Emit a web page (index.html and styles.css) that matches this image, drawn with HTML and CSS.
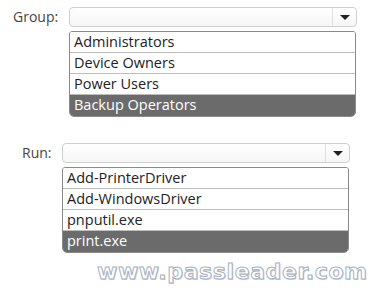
FILE: index.html
```html
<!DOCTYPE html>
<html lang="en">
<head>
  <meta charset="UTF-8">
  <title>Group and Run</title>
  <link rel="stylesheet" href="styles.css">
</head>
<body>

  <div class="field field-group">
    <label class="field-label">Group:</label>
    <div class="combo">
      <span class="combo-value"></span>
      <span class="combo-btn"><span class="arrow"></span></span>
    </div>
    <ul class="options">
      <li>Administrators</li>
      <li>Device Owners</li>
      <li>Power Users</li>
      <li class="selected">Backup Operators</li>
    </ul>
  </div>

  <div class="field field-run">
    <label class="field-label">Run:</label>
    <div class="combo">
      <span class="combo-value"></span>
      <span class="combo-btn"><span class="arrow"></span></span>
    </div>
    <ul class="options">
      <li>Add-PrinterDriver</li>
      <li>Add-WindowsDriver</li>
      <li>pnputil.exe</li>
      <li class="selected">print.exe</li>
    </ul>
  </div>

  <div class="watermark">www.passleader.com</div>

</body>
</html>
```

FILE: styles.css
```css
* {
  margin: 0;
  padding: 0;
  box-sizing: border-box;
}

body {
  font-family: 'Open Sans', 'Noto Sans', sans-serif;
  background: #fff;
  color: #222;
  width: 378px;
  height: 296px;
  overflow: hidden;
}

.field {
  display: grid;
  row-gap: 4px;
  align-items: center;
}

.field-group {
  padding: 7px 0 0 13px;
  grid-template-columns: 56px 288px;
}

.field-run {
  padding: 26px 0 0 22px;
  grid-template-columns: 40px 288px;
}

.field-label {
  font-size: 14px;
  color: #444;
  line-height: 20px;
}

.combo {
  height: 20px;
  display: flex;
  border: 1px solid #cfcfcf;
  border-radius: 4px;
  background: linear-gradient(#fff, #f6f6f6);
}

.combo-value {
  flex: 1;
}

.combo-btn {
  width: 24px;
  border-left: 1px solid #e0e0e0;
  display: flex;
  align-items: center;
  justify-content: center;
}

.arrow {
  width: 0;
  height: 0;
  border-left: 5px solid transparent;
  border-right: 5px solid transparent;
  border-top: 5px solid #222;
}

.options {
  grid-column: 2;
  width: 287px;
  list-style: none;
  border: 1px solid #8a8a8a;
  border-radius: 3px 3px 5px 5px;
  overflow: hidden;
}

.options li {
  height: 21px;
  line-height: 20px;
  padding-left: 4px;
  font-size: 14.5px;
  border-bottom: 1px solid #bdbdbd;
  background: #fff;
}

.options li.selected {
  background: #6b6b6b;
  color: #fff;
  border-bottom: none;
}

/* outlined site stamp at the bottom */
.watermark {
  margin: 6px 0 0 97px;
  font-family: 'DejaVu Sans', sans-serif;
  font-weight: bold;
  font-size: 22px;
  line-height: 26px;
  letter-spacing: 0.6px;
  color: #fff;
  -webkit-text-stroke: 1px #a4b2c8;
  text-shadow: 1px 1px 0 #ecd2b0;
}
```
